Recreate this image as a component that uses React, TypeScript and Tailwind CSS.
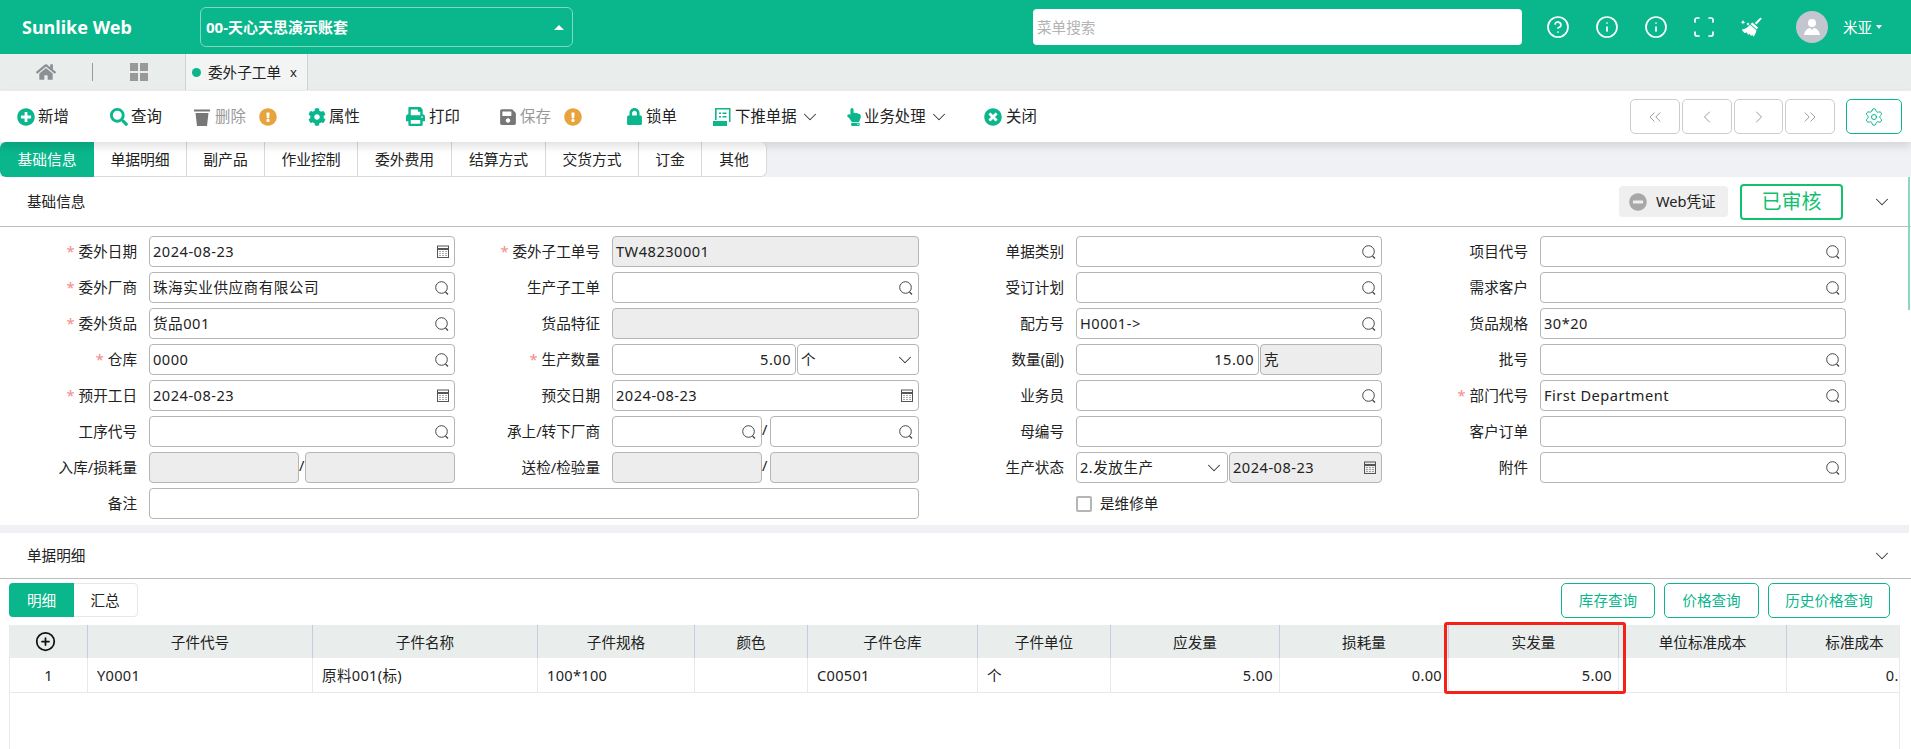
import type { ReactNode } from "react"
import { ChevronDown, ChevronLeft, ChevronRight, ChevronsLeft, ChevronsRight, CircleHelp, CirclePlus, Info, Scan, Settings } from "lucide-react"
import { FaCog, FaExclamationCircle, FaHandPointUp, FaHome, FaLock, FaMinusCircle, FaPlusCircle, FaPrint, FaSave, FaSearch, FaTimesCircle } from "react-icons/fa"

function SearchIcon() {
  return (
    <svg width="16" height="16" viewBox="0 0 16 16" fill="none" stroke="#444" strokeWidth="1" className="shrink-0">
      <circle cx="7.5" cy="7.5" r="5.8" />
      <path d="M11.5 12 L14 14.5" strokeWidth="1.3" />
    </svg>
  )
}

function CalendarIcon() {
  return (
    <svg width="14" height="15" viewBox="0 0 14 15" fill="none" stroke="#555" strokeWidth="1" className="shrink-0">
      <rect x="1.5" y="2" width="11" height="11.5" />
      <path d="M1.5 5 H12.5" strokeWidth="2" />
      <path d="M3.5 7.5h1M6.5 7.5h1M9.5 7.5h1M3.5 9.5h1M6.5 9.5h1M9.5 9.5h1M3.5 11.5h1M6.5 11.5h1M9.5 11.5h1" />
    </svg>
  )
}

function PushIcon() {
  return (
    <svg width="18" height="18" viewBox="0 0 18 18" className="text-[#0ab68b]">
      <path d="M2 0 H17.5 V14 H16 V1.6 H3.6 V12 H2 Z" fill="currentColor" />
      <path d="M0 13 H14 V18 H0 Z" fill="currentColor" />
      <path d="M6 4.5h2v1.6H6zM9.5 4.5h4v1.6h-4zM6 8h2v1.6H6zM9.5 8h4v1.6h-4z" fill="currentColor" />
    </svg>
  )
}

function TrashIcon() {
  return (
    <svg width="16" height="18" viewBox="0 0 16 18" fill="#777">
      <path d="M0 1.5 H16 V3.5 H0 Z" />
      <path d="M1.5 5 H14.5 L13 18 H3 Z" />
    </svg>
  )
}

function BroomIcon() {
  return (
    <svg width="21" height="20" viewBox="0 0 21 20" fill="#fff">
      <path d="M19.5 0.5 L20.8 1.8 L15.5 7.5 L13.8 6 Z" />
      <path d="M11.5 5.5 L17 10.5 L15.8 12.5 L9.5 7 Z" />
      <path d="M9 7.8 L15.4 13.3 C15 16 13.8 18.2 12.5 19.8 L11 17.5 L10.2 19.3 L8.5 16.8 L7 18 L6 15.5 L3.5 16 C2.5 15 1.5 14 0.8 12.4 C4 12.2 7 10.5 9 7.8 Z" />
      <path d="M2 3 L2.7 4.6 L4.3 5.3 L2.7 6 L2 7.6 L1.3 6 L-0.3 5.3 L1.3 4.6 Z" />
      <rect x="6" y="6" width="2" height="2" transform="rotate(45 7 7)" />
    </svg>
  )
}

function Field({ value, icon, gray, right, className }: { value?: string; icon?: "search" | "date" | "select"; gray?: boolean; right?: boolean; className?: string }) {
  return (
    <div className={`h-[31px] flex items-center min-w-0 border border-[#b5b5b5] rounded-[4px] pl-[3px] pr-[4px] tracking-[0.5px] ${gray ? "bg-[#ecedec]" : "bg-white"} ${className ?? "w-full"}`}>
      <span className={`flex-1 whitespace-nowrap ${right ? "text-right" : ""}`}>{value}</span>
      {icon === "search" && <SearchIcon />}
      {icon === "date" && <CalendarIcon />}
      {icon === "select" && <ChevronDown size={22} strokeWidth={1.1} className="text-[#333] shrink-0 -mr-[2px]" />}
    </div>
  )
}

function Label({ text, required }: { text: string; required?: boolean }) {
  return (
    <div className="flex items-center justify-end pr-[12px] whitespace-nowrap">
      {required && <span className="text-[#f58a8a] mr-[4px] leading-none">*</span>}
      {text}
    </div>
  )
}

function Slash({ width }: { width: string }) {
  return <span className={`${width} shrink-0 -mt-[4px]`}>/</span>
}

function ToolBtn({ icon, text, width, slot, muted, warn, caret }: { icon: ReactNode; text: string; width: string; slot?: string; muted?: boolean; warn?: boolean; caret?: boolean }) {
  return (
    <div className={`flex items-center shrink-0 ${width} ${muted ? "text-[#999]" : "text-[#222]"}`}>
      <span className={`${slot ?? "w-[21px]"} flex items-center shrink-0`}>{icon}</span>
      <span>{text}</span>
      {caret && <ChevronDown size={22} strokeWidth={1.1} className="ml-[2px] text-[#333]" />}
      {warn && <FaExclamationCircle size={18} className="ml-[13px] text-[#e8a33d]" />}
    </div>
  )
}

const tabs = [
  { text: "单据明细", w: "w-[93px]" },
  { text: "副产品", w: "w-[78px]" },
  { text: "作业控制", w: "w-[93px]" },
  { text: "委外费用", w: "w-[94px]" },
  { text: "结算方式", w: "w-[94px]" },
  { text: "交货方式", w: "w-[93px]" },
  { text: "订金", w: "w-[63px]" },
  { text: "其他", w: "w-[64px]" },
]

const columns = ["子件代号", "子件名称", "子件规格", "颜色", "子件仓库", "子件单位", "应发量", "损耗量", "实发量", "单位标准成本", "标准成本"]

const rowCells = [
  { text: "Y0001" },
  { text: "原料001(标)" },
  { text: "100*100" },
  { text: "" },
  { text: "C00501" },
  { text: "个" },
  { text: "5.00", right: true },
  { text: "0.00", right: true },
  { text: "5.00", right: true },
  { text: "" },
  { text: "0.00", right: true },
]

export default function App() {
  return (
    <div className="h-screen w-full overflow-hidden bg-white text-[14.6px] leading-none text-[#222] font-['Noto_Sans','Noto_Sans_CJK_SC',sans-serif]">
      {/* top bar */}
      <header className="h-[54px] bg-[#0ab68b] flex items-center text-white">
        <div className="w-[200px] pl-[22px] text-[18px] font-bold">Sunlike Web</div>
        <div className="w-[373px] h-[40px] border border-[#7fd8c2] rounded-[6px] flex items-center justify-between pl-[5px] pr-[8px] text-[15px] font-bold">
          <span>00-天心天思演示账套</span>
          <span className="w-0 h-0 border-x-[5px] border-x-transparent border-b-[5px] border-b-white" />
        </div>
        <div className="ml-[460px] w-[489px] h-[36px] bg-white rounded-[4px] flex items-center pl-[4px] text-[#b3b3b3]">菜单搜索</div>
        <div className="ml-[24px] w-[216px] flex items-center justify-between">
          <CircleHelp size={24} strokeWidth={1.7} />
          <Info size={24} strokeWidth={1.7} />
          <Info size={24} strokeWidth={1.7} />
          <Scan size={24} strokeWidth={1.7} />
          <BroomIcon />
        </div>
        <div className="ml-[34px] w-[32px] h-[32px] rounded-full bg-[#c3c6cf] flex items-center justify-center">
          <svg width="20" height="20" viewBox="0 0 20 20" fill="#fff">
            <circle cx="10" cy="6" r="4" />
            <path d="M2 18 C3 12 7 11 8 11 L10 13 L12 11 C13 11 17 12 18 18 Z" />
          </svg>
        </div>
        <span className="ml-[15px]">米亚</span>
        <span className="ml-[4px] w-0 h-0 border-x-[3px] border-x-transparent border-t-[4px] border-t-white" />
      </header>

      {/* open tabs */}
      <div className="h-[37px] bg-[#e9edec] flex items-stretch border-b border-[#f0f0f0]">
        <div className="w-[92px] flex items-center justify-center">
          <FaHome size={20} className="text-[#8d8f94]" />
        </div>
        <div className="w-px h-[18px] bg-[#999] self-center" />
        <div className="w-[92px] flex items-center justify-center">
          <div className="grid grid-cols-2 gap-[2px]">
            <span className="w-[8px] h-[8px] bg-[#999]" />
            <span className="w-[8px] h-[8px] bg-[#999]" />
            <span className="w-[8px] h-[8px] bg-[#999]" />
            <span className="w-[8px] h-[8px] bg-[#999]" />
          </div>
        </div>
        <div className="w-[123px] bg-[#f3f5f5] border-x border-[#cfd2d2] flex items-center pl-[6px]">
          <span className="w-[9px] h-[9px] rounded-full bg-[#0ab68b]" />
          <span className="ml-[7px]">委外子工单</span>
          <span className="ml-[9px] text-[13px]">x</span>
        </div>
      </div>

      {/* toolbar */}
      <div className="relative z-10 h-[51px] bg-white flex items-center pl-[17px] pr-[9px] text-[15.4px] shadow-[0_4px_9px_rgba(0,0,0,0.13)]">
        <ToolBtn width="w-[93px]" text="新增" icon={<FaPlusCircle size={18} className="text-[#0ab68b]" />} />
        <ToolBtn width="w-[84px]" text="查询" icon={<FaSearch size={18} className="text-[#0ab68b]" />} />
        <ToolBtn width="w-[114px]" text="删除" muted warn icon={<TrashIcon />} />
        <ToolBtn width="w-[98px]" text="属性" icon={<FaCog size={18} className="text-[#0ab68b]" />} />
        <ToolBtn width="w-[93px]" slot="w-[23px]" text="打印" icon={<FaPrint size={19} className="text-[#0ab68b]" />} />
        <ToolBtn width="w-[127px]" text="保存" muted warn icon={<FaSave size={18} className="text-[#777]" />} />
        <ToolBtn width="w-[87px]" slot="w-[20px]" text="锁单" icon={<FaLock size={17} className="text-[#0ab68b]" />} />
        <ToolBtn width="w-[132px]" slot="w-[22px]" text="下推单据" caret icon={<PushIcon />} />
        <ToolBtn width="w-[139px]" slot="w-[19px]" text="业务处理" caret icon={<FaHandPointUp size={18} className="text-[#0ab68b]" />} />
        <ToolBtn width="w-[60px]" slot="w-[22px]" text="关闭" icon={<FaTimesCircle size={18} className="text-[#0ab68b]" />} />
        <div className="ml-auto flex gap-[2px]">
          <button className="w-[50px] h-[35px] border border-[#ccc] rounded-[5px] flex items-center justify-center text-[#888]"><ChevronsLeft size={20} strokeWidth={1} /></button>
          <button className="w-[50px] h-[35px] border border-[#ccc] rounded-[5px] flex items-center justify-center text-[#888]"><ChevronLeft size={20} strokeWidth={1} /></button>
          <button className="w-[49px] h-[35px] border border-[#ccc] rounded-[5px] flex items-center justify-center text-[#888]"><ChevronRight size={20} strokeWidth={1} /></button>
          <button className="w-[50px] h-[35px] border border-[#ccc] rounded-[5px] flex items-center justify-center text-[#888]"><ChevronsRight size={20} strokeWidth={1} /></button>
        </div>
        <button className="ml-[11px] w-[56px] h-[35px] border border-[#0ab68b] rounded-[5px] flex items-center justify-center text-[#0ab68b]"><Settings size={20} strokeWidth={1.2} /></button>
      </div>

      {/* page tabs */}
      <div className="h-[35px] bg-[#eff1f5] flex text-[14.8px]">
        <div className="w-[94px] bg-[#0ab68b] text-white rounded-l-[6px] flex items-center justify-center">基础信息</div>
        <div className="flex bg-white border-b border-[#d8d8de] rounded-r-[6px] border-r">
          {tabs.map((t) => (
            <div key={t.text} className={`${t.w} flex items-center justify-center border-r last:border-r-0 border-[#d8d8de]`}>{t.text}</div>
          ))}
        </div>
      </div>

      <div className="relative">
        <div className="absolute right-[1px] top-0 w-[2px] h-[133px] bg-[#8ad8c4] z-10" />

        {/* basic info */}
        <div className="h-[50px] flex items-center border-b border-[#bdbdbd] pl-[27px] pr-[18px]">
          <span>基础信息</span>
          <div className="ml-auto w-[109px] h-[31px] bg-[#efefef] rounded-[4px] flex items-center pl-[10px] gap-[9px]">
            <FaMinusCircle size={18} className="text-[#a8a8a8]" />
            <span>Web凭证</span>
          </div>
          <div className="ml-[12px] w-[103px] h-[36px] border-2 border-[#12c06e] rounded-[4px] flex items-center justify-center text-[20px] text-[#12c06e]">已审核</div>
          <ChevronDown size={22} strokeWidth={1.1} className="ml-[28px] text-[#333]" />
        </div>

        <div className="h-[298px] pt-[9px] grid grid-cols-[149px_306px_157px_307px_157px_306px_158px_306px] auto-rows-[31px] gap-y-[5px]">
          <Label text="委外日期" required />
          <Field value="2024-08-23" icon="date" />
          <Label text="委外子工单号" required />
          <Field value="TW48230001" gray />
          <Label text="单据类别" />
          <Field icon="search" />
          <Label text="项目代号" />
          <Field icon="search" />

          <Label text="委外厂商" required />
          <Field value="珠海实业供应商有限公司" icon="search" />
          <Label text="生产子工单" />
          <Field icon="search" />
          <Label text="受订计划" />
          <Field icon="search" />
          <Label text="需求客户" />
          <Field icon="search" />

          <Label text="委外货品" required />
          <Field value="货品001" icon="search" />
          <Label text="货品特征" />
          <Field gray />
          <Label text="配方号" />
          <Field value="H0001->" icon="search" />
          <Label text="货品规格" />
          <Field value="30*20" />

          <Label text="仓库" required />
          <Field value="0000" icon="search" />
          <Label text="生产数量" required />
          <div className="flex gap-px">
            <Field value="5.00" right className="w-[184px]" />
            <Field value="个" icon="select" className="w-[122px]" />
          </div>
          <Label text="数量(副)" />
          <div className="flex gap-px">
            <Field value="15.00" right className="w-[183px]" />
            <Field value="克" gray className="w-[122px]" />
          </div>
          <Label text="批号" />
          <Field icon="search" />

          <Label text="预开工日" required />
          <Field value="2024-08-23" icon="date" />
          <Label text="预交日期" />
          <Field value="2024-08-23" icon="date" />
          <Label text="业务员" />
          <Field icon="search" />
          <Label text="部门代号" required />
          <Field value="First Department" icon="search" />

          <Label text="工序代号" />
          <Field icon="search" />
          <Label text="承上/转下厂商" />
          <div className="flex items-center">
            <Field icon="search" className="w-[150px]" />
            <Slash width="w-[8px]" />
            <Field icon="search" className="w-[149px]" />
          </div>
          <Label text="母编号" />
          <Field />
          <Label text="客户订单" />
          <Field />

          <Label text="入库/损耗量" />
          <div className="flex items-center">
            <Field gray className="w-[150px]" />
            <Slash width="w-[6px]" />
            <Field gray className="w-[150px]" />
          </div>
          <Label text="送检/检验量" />
          <div className="flex items-center">
            <Field gray className="w-[150px]" />
            <Slash width="w-[8px]" />
            <Field gray className="w-[149px]" />
          </div>
          <Label text="生产状态" />
          <div className="flex gap-px">
            <Field value="2.发放生产" icon="select" className="w-[152px]" />
            <Field value="2024-08-23" icon="date" gray className="w-[153px]" />
          </div>
          <Label text="附件" />
          <Field icon="search" />

          <Label text="备注" />
          <Field className="col-span-3" />
          <div />
          <div className="flex items-center gap-[8px]">
            <span className="w-[16px] h-[16px] border-2 border-[#b5b5b5] rounded-[2px]" />
            <span>是维修单</span>
          </div>
        </div>

        <div className="h-[8px] bg-[#eff1f5] mr-[2px]" />

        {/* detail */}
        <div className="h-[46px] flex items-center justify-between border-b border-[#bdbdbd] pl-[27px] pr-[18px]">
          <span>单据明细</span>
          <ChevronDown size={22} strokeWidth={1.1} className="text-[#333]" />
        </div>

        <div className="h-[46px] flex items-start pt-[4px] pl-[9px] pr-[21px]">
          <div className="flex h-[34px] w-[129px] border border-[#e5e7ef] rounded-[4px]">
            <div className="w-[65px] -m-px bg-[#0ab68b] text-white rounded-l-[4px] flex items-center justify-center">明细</div>
            <div className="flex-1 flex items-center justify-center">汇总</div>
          </div>
          <div className="ml-auto flex gap-[9px] text-[#0ab68b]">
            <button className="w-[94px] h-[35px] border border-[#0ab68b] rounded-[5px]">库存查询</button>
            <button className="w-[95px] h-[35px] border border-[#0ab68b] rounded-[5px]">价格查询</button>
            <button className="w-[122px] h-[35px] border border-[#0ab68b] rounded-[5px]">历史价格查询</button>
          </div>
        </div>

        <div className="relative ml-[9px] w-[1891px] h-[200px] border-l border-r border-[#e8e9ee]">
          <div className="overflow-hidden w-full">
            <div className="grid w-[1913px] grid-cols-[78px_225px_225px_157px_113px_170px_133px_169px_169px_170px_168px_136px] grid-rows-[33px_35px]">
              <div className="bg-[#e9edec] border-r border-[#c8ccdc] flex items-center justify-center pr-[6px]">
                <CirclePlus size={21} strokeWidth={2} className="text-[#111]" />
              </div>
              {columns.map((c) => (
                <div key={c} className="bg-[#e9edec] border-r border-[#c8ccdc] flex items-center justify-center pt-[1px]">{c}</div>
              ))}
              <div className="border-r border-b border-[#e8e9ee] flex items-center justify-center pt-[1px]">1</div>
              {rowCells.map((c, i) => (
                <div key={i} className={`border-r border-b border-[#e8e9ee] flex items-center pt-[1px] tracking-[0.3px] ${c.right ? "justify-end pr-[6px]" : "pl-[9px]"}`}>{c.text}</div>
              ))}
            </div>
          </div>
          <div className="absolute left-[1434px] -top-[3px] w-[182px] h-[72px] border-[3px] border-[#f5211b] rounded-[3px]" />
        </div>
      </div>
    </div>
  )
}
